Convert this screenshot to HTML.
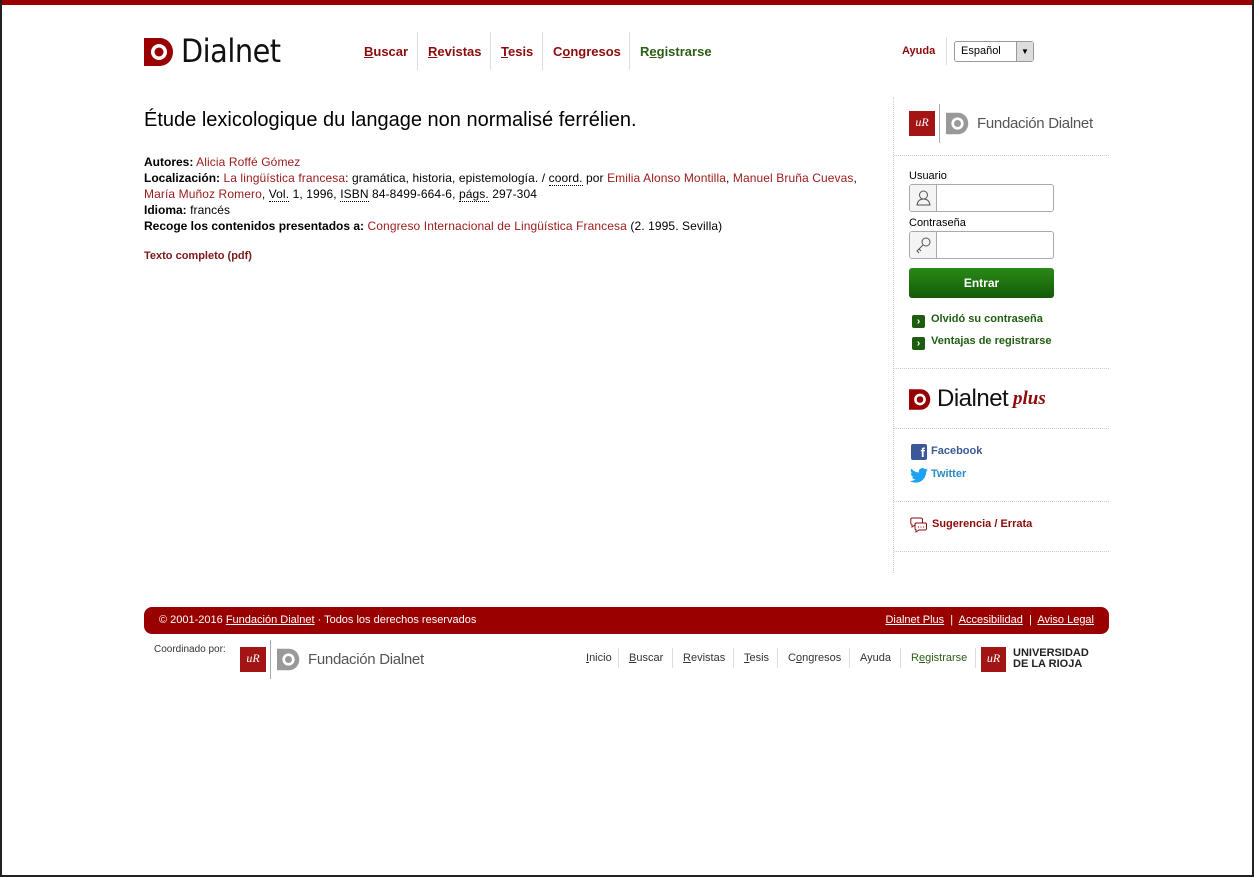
<!DOCTYPE html>
<html><head><meta charset="utf-8"><style>
*{margin:0;padding:0;box-sizing:border-box}
body{width:1254px;height:877px;background:#fff;font-family:"Liberation Sans",Arial,sans-serif;position:relative;overflow:hidden;color:#000}
.frame{position:absolute;left:0;top:0;width:1254px;height:877px;border-left:2px solid #222;border-right:2px solid #222;border-bottom:2px solid #222}
.top{position:absolute;left:0;top:0;width:1254px;height:5px;background:#990000}
.abs{position:absolute}
a{color:#990000;text-decoration:none}
.nav a{position:absolute;top:44px;font-size:13px;font-weight:bold;color:#8b0b0b}
.vs{position:absolute;width:1px;background:#ddd}
.meta{font-size:12px;line-height:16px;letter-spacing:0.1px}
.meta b{font-weight:bold;letter-spacing:0}
.meta a{color:#9a1a1a}
.abbr{border-bottom:1px dotted #000}
.dot{position:absolute;left:894px;width:215px;border-top:1px dotted #ccc}
.lbl{font-size:11px;color:#000}
.inp{position:absolute;left:909px;width:145px;height:28px;border:1px solid #aaa;border-radius:3px;background:#fff}
.inp .ic{position:absolute;left:0;top:0;width:27px;height:26px;border-right:1px solid #aaa;background:#f4f4f4;border-radius:3px 0 0 3px}
.gl{position:absolute;left:912px;font-size:11px;font-weight:bold;color:#1f5e0f}
.gl i{display:inline-block;width:13px;height:13px;background:#1e5c10;border-radius:2px;color:#fff;font-style:normal;font-size:10px;text-align:center;line-height:13px;margin-right:6px;vertical-align:-2px}
.fbar{position:absolute;left:144px;top:607px;width:965px;height:27px;background:#990000;border-radius:8px;color:#fff;font-size:11px}
.fbar a{color:#fff;text-decoration:underline}
.fn{position:absolute;top:652px;font-size:11px;color:#333}
.fn u{text-decoration:underline}
</style></head><body>
<div class="top"></div>
<div class="frame"></div>

<svg class="abs" style="left:144px;top:38px" width="30" height="28" viewBox="0 0 30 28"><path d="M0 0H16A13 14 0 0 1 16 28H0Z" fill="#990000"/><circle cx="15" cy="14" r="8" fill="#fff"/><circle cx="15" cy="14" r="4.5" fill="#990000"/></svg>
<div class="abs" style="left:181px;top:32px;font-size:32px;color:#111;letter-spacing:-0.5px;font-family:'DejaVu Sans Condensed','Liberation Sans',sans-serif;font-weight:300">Dialnet</div>

<div class="nav">
<a style="left:364px"><u>B</u>uscar</a>
<div class="vs" style="left:417px;top:32px;height:38px"></div>
<a style="left:428px"><u>R</u>evistas</a>
<div class="vs" style="left:490px;top:32px;height:38px"></div>
<a style="left:501px"><u>T</u>esis</a>
<div class="vs" style="left:542px;top:32px;height:38px"></div>
<a style="left:553px">C<u>o</u>ngresos</a>
<div class="vs" style="left:629px;top:32px;height:38px"></div>
<a style="left:640px;color:#2b5e14">R<u>e</u>gistrarse</a>
</div>
<div class="abs" style="left:902px;top:45px;font-size:11px;font-weight:bold;color:#8b0b0b">Ayuda</div>
<div class="vs" style="left:946px;top:37px;height:28px"></div>
<div class="abs" style="left:954px;top:41px;width:80px;height:21px;border:1px solid #999;border-radius:3px;font-size:11px;padding:3px 0 0 6px">Español<div class="abs" style="right:0;top:0;width:17px;height:19px;background:#ddd;border-left:1px solid #999;font-size:8px;text-align:center;line-height:19px">▼</div></div>

<div class="abs" style="left:144px;top:109px;font-size:20px;color:#000">Étude lexicologique du langage non normalisé ferrélien.</div>
<div class="abs meta" style="left:144px;top:154px;width:740px">
<b>Autores:</b> <a>Alicia Roffé Gómez</a><br>
<b>Localización:</b> <a>La lingüística francesa</a>: gramática, historia, epistemología. / <span class="abbr">coord.</span> por <a>Emilia Alonso Montilla</a>, <a>Manuel Bruña Cuevas</a>,<br>
<a>María Muñoz Romero</a>, <span class="abbr">Vol.</span> 1, 1996, <span class="abbr">ISBN</span> 84-8499-664-6, <span class="abbr">págs.</span> 297-304<br>
<b>Idioma:</b> francés<br>
<b>Recoge los contenidos presentados a:</b> <a>Congreso Internacional de Lingüística Francesa</a> (2. 1995. Sevilla)
</div>
<div class="abs" style="left:144px;top:250px;font-size:11px;font-weight:bold;color:#7a1a1a">Texto completo (pdf)</div>

<div class="abs" style="left:893px;top:97px;height:476px;border-left:1px dotted #ccc"></div>
<div class="abs" style="left:909px;top:111px;width:26px;height:25px;background:#a31515;color:#fff;font-size:12px;font-family:'Liberation Serif',serif;font-style:italic;text-align:center;line-height:23px">uR</div>
<div class="vs" style="left:939px;top:104px;height:39px;background:#aaa"></div>
<svg class="abs" style="left:946px;top:112px" width="23" height="23" viewBox="0 0 30 28"><path d="M0 0H16A13 14 0 0 1 16 28H0Z" fill="#999"/><circle cx="15" cy="14" r="8" fill="#fff"/><circle cx="15" cy="14" r="4.5" fill="#999"/></svg>
<div class="abs" style="left:977px;top:115px;font-size:15px;color:#555;letter-spacing:-0.3px">Fundación Dialnet</div>
<div class="dot" style="top:155px"></div>
<div class="abs lbl" style="left:909px;top:170px">Usuario</div>
<div class="inp" style="top:184px"><div class="ic"><svg width="27" height="26"><circle cx="13.5" cy="10" r="4" fill="none" stroke="#555"/><path d="M7 20Q8 14 13.5 14Q19 14 20 20Z" fill="none" stroke="#555"/></svg></div></div>
<div class="abs lbl" style="left:909px;top:217px">Contraseña</div>
<div class="inp" style="top:231px"><div class="ic"><svg width="27" height="26"><circle cx="16" cy="10" r="4" fill="none" stroke="#555"/><path d="M13 13L7 19L9 21M9 17L11 19" fill="none" stroke="#555"/></svg></div></div>
<div class="abs" style="left:909px;top:268px;width:145px;height:30px;border-radius:3px;background:linear-gradient(#2a8a18,#145a08);color:#fff;font-size:12px;font-weight:bold;text-align:center;line-height:30px">Entrar</div>
<div class="gl" style="top:313px"><i>›</i>Olvidó su contraseña</div>
<div class="gl" style="top:335px"><i>›</i>Ventajas de registrarse</div>
<div class="dot" style="top:368px"></div>
<svg class="abs" style="left:909px;top:389px" width="22" height="21" viewBox="0 0 30 28"><path d="M0 0H16A13 14 0 0 1 16 28H0Z" fill="#990000"/><circle cx="15" cy="14" r="8" fill="#fff"/><circle cx="15" cy="14" r="4.5" fill="#990000"/></svg>
<div class="abs" style="left:937px;top:385px;font-size:24px;color:#111;letter-spacing:-0.5px;font-weight:300">Dialnet</div>
<div class="abs" style="left:1013px;top:388px;font-size:19px;color:#8b0b0b;font-family:'Liberation Serif',serif;font-style:italic;font-weight:bold">plus</div>
<div class="dot" style="top:428px"></div>
<div class="abs" style="left:911px;top:444px;width:16px;height:16px;background:#3b5998;border-radius:2px;color:#fff;font-weight:bold;font-size:13px;text-align:right;padding-right:2px;line-height:18px">f</div>
<div class="abs" style="left:931px;top:445px;font-size:11px;font-weight:bold;color:#3b5998">Facebook</div>
<svg class="abs" style="left:910px;top:468px" width="18" height="15" viewBox="0 0 24 20"><path d="M24 2.4a10 10 0 0 1-2.8.8A5 5 0 0 0 23.3.5a10 10 0 0 1-3.1 1.2A4.9 4.9 0 0 0 11.8 6 14 14 0 0 1 1.7.9a4.9 4.9 0 0 0 1.5 6.6A4.9 4.9 0 0 1 1 6.9a4.9 4.9 0 0 0 3.9 4.8 4.9 4.9 0 0 1-2.2.1 4.9 4.9 0 0 0 4.6 3.4A9.9 9.9 0 0 1 0 17.3 14 14 0 0 0 7.5 19.5c9 0 14-7.5 14-14v-.6A10 10 0 0 0 24 2.4z" fill="#1da1f2"/></svg>
<div class="abs" style="left:931px;top:468px;font-size:11px;font-weight:bold;color:#2a8ac6">Twitter</div>
<div class="dot" style="top:501px"></div>
<svg class="abs" style="left:910px;top:516px" width="18" height="17" viewBox="0 0 18 17"><path d="M2 2h9a1.5 1.5 0 0 1 1.5 1.5v4a1.5 1.5 0 0 1-1.5 1.5H5l-3 2v-2.2A1.5 1.5 0 0 1 .8 7.5v-4A1.5 1.5 0 0 1 2 2z" fill="#fff" stroke="#8b0b0b"/><path d="M6 7h9a1.5 1.5 0 0 1 1.5 1.5v4A1.5 1.5 0 0 1 15 14h-6l-3 2v-2.2a1.5 1.5 0 0 1-1-1.3v-4A1.5 1.5 0 0 1 6 7z" fill="#fff" stroke="#8b0b0b"/><path d="M8 11h1M10.5 11h1M13 11h1" stroke="#8b0b0b"/></svg>
<div class="abs" style="left:932px;top:518px;font-size:11px;font-weight:bold;color:#8b0b0b">Sugerencia / Errata</div>
<div class="dot" style="top:551px"></div>

<div class="fbar">
<div class="abs" style="left:15px;top:7px">© 2001-2016 <a>Fundación Dialnet</a> · Todos los derechos reservados</div>
<div class="abs" style="right:15px;top:7px"><a>Dialnet Plus</a> &nbsp;|&nbsp; <a>Accesibilidad</a> &nbsp;|&nbsp; <a>Aviso Legal</a></div>
</div>
<div class="abs" style="left:154px;top:644px;font-size:10px;color:#333">Coordinado por:</div>
<div class="abs" style="left:240px;top:647px;width:26px;height:25px;background:#a31515;color:#fff;font-size:12px;font-family:'Liberation Serif',serif;font-style:italic;text-align:center;line-height:23px">uR</div>
<div class="vs" style="left:270px;top:640px;height:39px;background:#aaa"></div>
<svg class="abs" style="left:277px;top:648px" width="23" height="23" viewBox="0 0 30 28"><path d="M0 0H16A13 14 0 0 1 16 28H0Z" fill="#999"/><circle cx="15" cy="14" r="8" fill="#fff"/><circle cx="15" cy="14" r="4.5" fill="#999"/></svg>
<div class="abs" style="left:308px;top:651px;font-size:15px;color:#555;letter-spacing:-0.3px">Fundación Dialnet</div>
<div class="fn" style="left:586px"><u>I</u>nicio</div>
<div class="vs" style="left:618px;top:648px;height:20px"></div>
<div class="fn" style="left:629px"><u>B</u>uscar</div>
<div class="vs" style="left:672px;top:648px;height:20px"></div>
<div class="fn" style="left:683px"><u>R</u>evistas</div>
<div class="vs" style="left:733px;top:648px;height:20px"></div>
<div class="fn" style="left:744px"><u>T</u>esis</div>
<div class="vs" style="left:777px;top:648px;height:20px"></div>
<div class="fn" style="left:788px">C<u>o</u>ngresos</div>
<div class="vs" style="left:849px;top:648px;height:20px"></div>
<div class="fn" style="left:860px">Ayuda</div>
<div class="vs" style="left:900px;top:648px;height:20px"></div>
<div class="fn" style="left:911px;color:#2b5e14">R<u>e</u>gistrarse</div>
<div class="vs" style="left:975px;top:648px;height:20px"></div>
<div class="abs" style="left:981px;top:647px;width:25px;height:25px;background:#a31515;color:#fff;font-size:12px;font-family:'Liberation Serif',serif;font-style:italic;text-align:center;line-height:23px">uR</div>
<div class="abs" style="left:1013px;top:648px;font-size:11px;font-weight:bold;color:#222;line-height:11px">UNIVERSIDAD<br>DE LA RIOJA</div>
</body></html>
